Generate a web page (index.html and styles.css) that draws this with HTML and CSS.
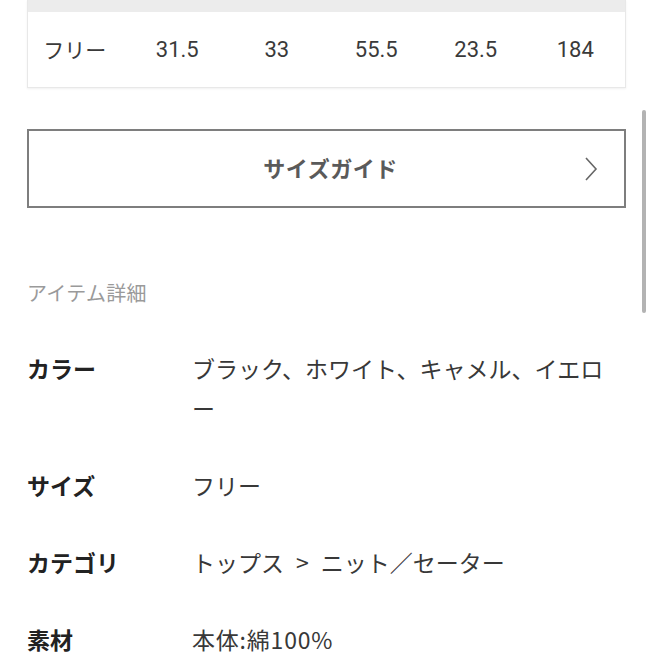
FILE: index.html
```html
<!DOCTYPE html>
<html lang="ja">
<head>
<meta charset="utf-8">
<link rel="stylesheet" href="styles.css">
</head>
<body>
<div class="page">
  <div class="size-table">
    <div class="size-head"></div>
    <div class="size-row">
      <span>フリー</span><span>31.5</span><span>33</span><span>55.5</span><span>23.5</span><span>184</span>
    </div>
  </div>

  <a class="guide" href="#">
    <span class="guide-label">サイズガイド</span>
    <svg class="chev" width="14" height="26" viewBox="0 0 14 26"><polyline points="2,2 12,13 2,24" fill="none" stroke="#666" stroke-width="1.6"/></svg>
  </a>

  <h2 class="section-title">アイテム詳細</h2>

  <dl class="specs">
    <dt>カラー</dt><dd>ブラック、ホワイト、キャメル、イエロー</dd>
    <dt>サイズ</dt><dd>フリー</dd>
    <dt>カテゴリ</dt><dd>トップス<span class="sep">&gt;</span>ニット／セーター</dd>
    <dt>素材</dt><dd class="material">本体:綿100%</dd>
  </dl>
</div>
<div class="scrollbar"></div>
</body>
</html>
```

FILE: styles.css
```css
html, body {
  margin: 0;
  padding: 0;
  background: #fff;
}
body {
  font-family: "Noto Sans CJK JP", "Noto Sans", sans-serif;
  color: #333;
  overflow: hidden;
  height: 653px;
}
.page {
  padding: 0 27px;
}
.size-table {
  border: 1px solid #e8e8e8;
  border-top: none;
  box-shadow: 0 1px 2px rgba(0,0,0,0.06);
}
.size-head {
  height: 12px;
  background: #ececec;
}
.size-row {
  display: grid;
  grid-template-columns: repeat(6, 1fr);
  height: 75px;
  align-items: center;
  font-family: "Roboto", "Noto Sans CJK JP", sans-serif;
  font-size: 22px;
  color: #3a3a3a;
}
.size-row span {
  text-align: center;
  padding-bottom: 1px;
}
.size-row span:first-child {
  font-family: "Noto Sans CJK JP", sans-serif;
  font-size: 21px;
  padding-right: 6px;
}
.guide {
  margin-top: 41px;
  height: 75px;
  border: 2px solid #7e7e7e;
  display: flex;
  align-items: center;
  justify-content: center;
  position: relative;
  text-decoration: none;
}
.guide-label {
  font-size: 22px;
  font-weight: 700;
  color: #5a5a5a;
  margin-left: 8px;
  margin-bottom: 4px;
  letter-spacing: 0.5px;
}
.chev {
  position: absolute;
  right: 26px;
  top: 25px;
}
.section-title {
  margin: 70px 0 0;
  font-size: 20px;
  line-height: 30px;
  font-weight: 400;
  color: #9a9a9a;
  letter-spacing: 0.3px;
}
.specs {
  margin: 40px 0 0;
  display: grid;
  grid-template-columns: 165px 1fr;
  row-gap: 37px;
  font-size: 23px;
  line-height: 40px;
}
.specs dt {
  font-weight: 700;
  color: #222;
}
.specs dd {
  margin: 0;
  color: #383838;
}
.sep {
  margin: 0 12px;
}
.material {
  letter-spacing: 0.8px;
}
.scrollbar {
  position: absolute;
  left: 642px;
  top: 110px;
  width: 4px;
  height: 203px;
  border-radius: 2px;
  background: #b3b3b3;
}
```
